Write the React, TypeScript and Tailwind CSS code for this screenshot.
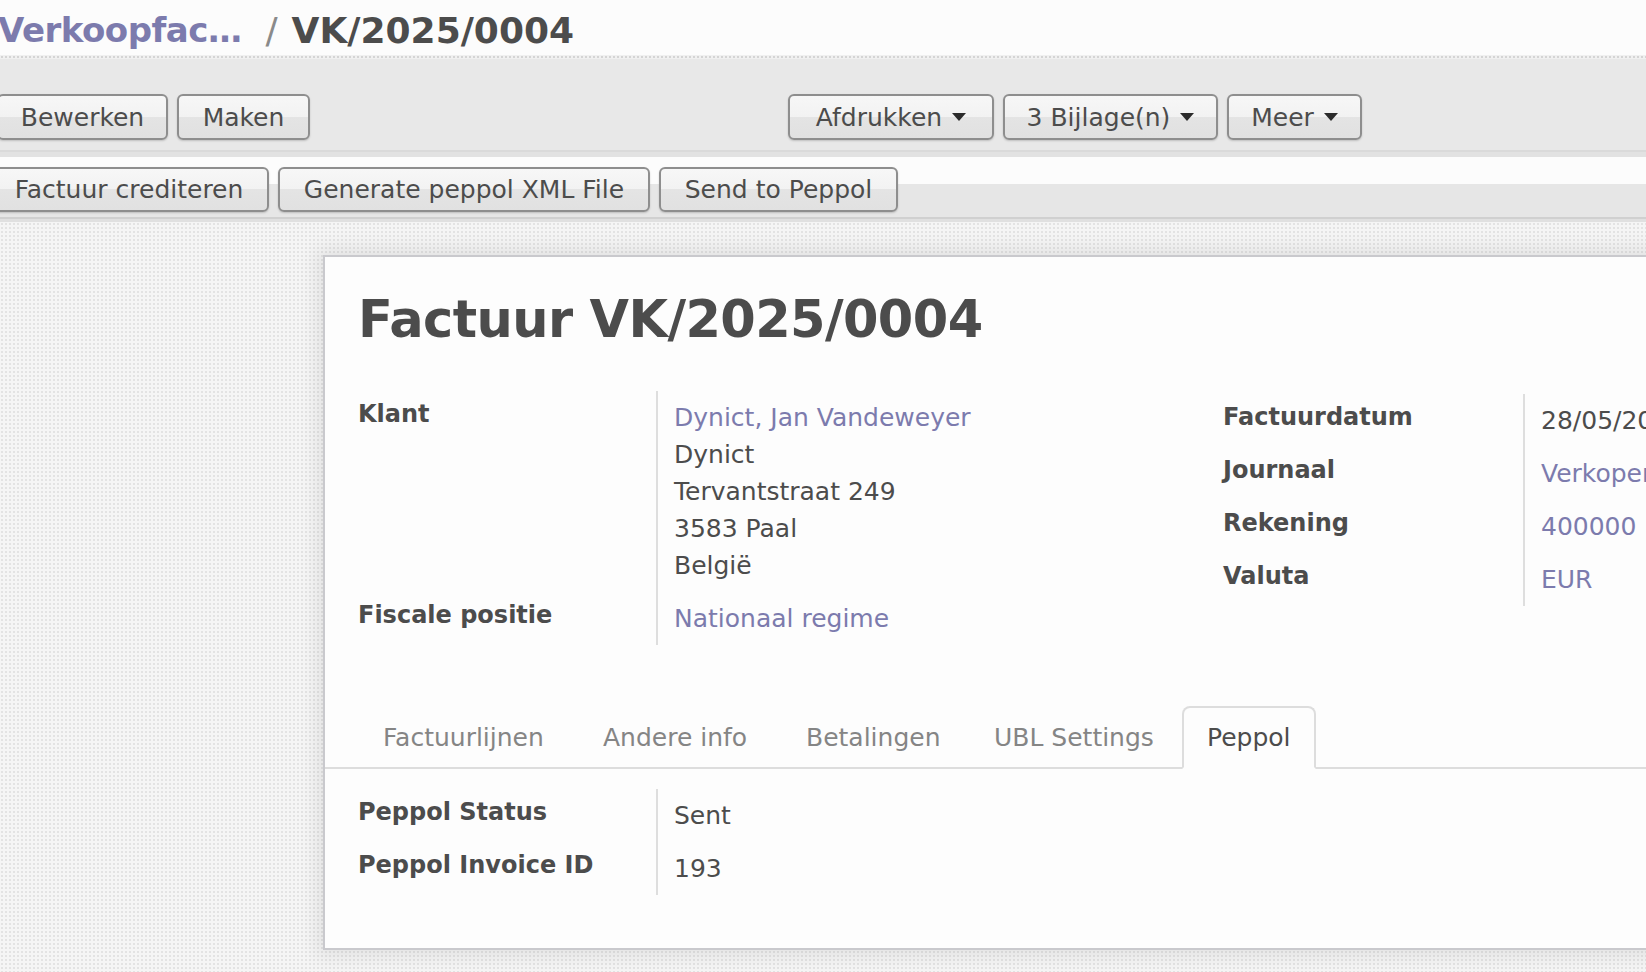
import React from "react";

const Caret = () => (
  <svg width="14" height="8" viewBox="0 0 14 8" className="shrink-0">
    <path d="M0 0h14L7 8z" fill="#2b2b2b" />
  </svg>
);

function Btn({ w, children, caret }: { w: string; children: React.ReactNode; caret?: boolean }) {
  return (
    <div
      className={
        "flex shrink-0 items-center justify-center gap-[10px] rounded-[6px] border-2 border-[#8e8e8e] bg-[linear-gradient(#f7f7f7_0%,#f2f2f2_50%,#e4e4e4_50%,#e1e1e1_100%)] text-[25px] leading-none text-[#4c4c4c] shadow-[0_1px_2px_rgba(0,0,0,0.18)] " +
        w
      }
    >
      <span>{children}</span>
      {caret ? <Caret /> : null}
    </div>
  );
}

function Row({ label, labelW, children }: { label: string; labelW: string; children: React.ReactNode }) {
  return (
    <div className="flex">
      <div className={"shrink-0 border-r-2 border-[#dedede] pt-[5px] pb-[8px] text-[24px] font-bold leading-[37px] text-[#4c4c4c] " + labelW}>
        {label}
      </div>
      <div className="py-[8px] pl-[16px] text-[25px] leading-[37px] text-[#4c4c4c] whitespace-nowrap">{children}</div>
    </div>
  );
}

const Link = ({ children }: { children: React.ReactNode }) => <span className="text-[#7c7bad]">{children}</span>;

function Tab({ w, active, children }: { w: string; active?: boolean; children: React.ReactNode }) {
  return (
    <div
      className={
        "-mb-[2px] shrink-0 rounded-t-[8px] border-2 pt-[11px] pb-[11px] pl-[23px] text-[25px] leading-[37px] whitespace-nowrap " +
        (active
          ? "border-[#dddddd] border-b-[#fdfdfd] bg-[#fdfdfd] text-[#4c4c4c] "
          : "border-transparent text-[#858585] ") +
        w
      }
    >
      {children}
    </div>
  );
}

export default function App() {
  return (
    <div className="flex h-[972px] w-[1646px] flex-col overflow-hidden bg-[#f4f4f4] font-['DejaVu_Sans',sans-serif]">
      {/* breadcrumb */}
      <div className="flex h-[55px] shrink-0 items-center bg-[#fcfcfc] pt-[6px] whitespace-nowrap">
        <span className="ml-[-2px] text-[34px] font-bold tracking-[-0.5px] text-[#7c7bad]">Verkoopfac…</span>
        <span className="ml-[24px] text-[36px] text-[#8a8a8a]">/</span>
        <span className="ml-[14px] text-[36px] font-bold text-[#4c4c4c]">VK/2025/0004</span>
      </div>
      <div className="h-[4px] shrink-0 bg-[#f0f0f0] bg-[radial-gradient(circle,#d4d4d4_0.8px,transparent_1.2px)] bg-[length:4px_4px]" />
      {/* row 1 */}
      <div className="flex h-[91px] shrink-0 items-start bg-[#e8e8e8] pt-[35px]">
        <div className="ml-[-3px] flex gap-[9px]">
          <Btn w="h-[46px] w-[171px]">Bewerken</Btn>
          <Btn w="h-[46px] w-[133px]">Maken</Btn>
        </div>
        <div className="ml-[478px] flex gap-[9px]">
          <Btn w="h-[46px] w-[206px]" caret>Afdrukken</Btn>
          <Btn w="h-[46px] w-[215px]" caret>3 Bijlage(n)</Btn>
          <Btn w="h-[46px] w-[135px]" caret>Meer</Btn>
        </div>
      </div>
      <div className="h-[7px] shrink-0 border-t-2 border-[#dadada] bg-[#e2e2e2]" />
      {/* row 2 */}
      <div className="flex h-[60px] shrink-0 items-start bg-[linear-gradient(#fcfcfc_0%,#fcfcfc_45%,#e6e6e6_45%,#e6e6e6_100%)] pt-[10px]">
        <div className="ml-[-11px] flex gap-[9px]">
          <Btn w="h-[45px] w-[280px]">Factuur crediteren</Btn>
          <Btn w="h-[45px] w-[372px]">Generate peppol XML File</Btn>
          <Btn w="h-[45px] w-[239px]">Send to Peppol</Btn>
        </div>
      </div>
      <div className="h-[5px] shrink-0 border-t-2 border-[#d0d0d0] bg-[#e0e0e0]" />
      {/* page */}
      <div className="flex-1 bg-[#f5f5f5] bg-[radial-gradient(circle,#e3e3e3_1px,transparent_1.4px)] bg-[length:4px_4px] pt-[33px] pl-[323px]">
        <div className="w-[1500px] border-2 border-[#c9c9cd] bg-[#fdfdfd] pb-[53px] shadow-[0_0_18px_6px_rgba(0,0,0,0.08)]">
          <div className="mt-[33px] pl-[33px] text-[51px] font-bold leading-[60px] tracking-[-0.6px] text-[#4c4c4c]">
            Factuur VK/2025/0004
          </div>
          <div className="mt-[41px] flex pl-[33px]">
            <div className="w-[865px] shrink-0">
              <Row label="Klant" labelW="w-[300px]">
                <div><Link>Dynict, Jan Vandeweyer</Link></div>
                <div>Dynict</div>
                <div>Tervantstraat 249</div>
                <div>3583 Paal</div>
                <div>België</div>
              </Row>
              <Row label="Fiscale positie" labelW="w-[300px]">
                <Link>Nationaal regime</Link>
              </Row>
            </div>
            <div className="mt-[3px]">
              <Row label="Factuurdatum" labelW="w-[302px]">28/05/2025</Row>
              <Row label="Journaal" labelW="w-[302px]"><Link>Verkopen (EUR)</Link></Row>
              <Row label="Rekening" labelW="w-[302px]"><Link>400000 Handelsdebiteuren</Link></Row>
              <Row label="Valuta" labelW="w-[302px]"><Link>EUR</Link></Row>
            </div>
          </div>
          {/* notebook */}
          <div className="mt-[61px] flex border-b-2 border-[#dddddd] pl-[33px]">
            <Tab w="w-[220px]">Factuurlijnen</Tab>
            <Tab w="w-[203px]">Andere info</Tab>
            <Tab w="w-[188px]">Betalingen</Tab>
            <Tab w="w-[213px]">UBL Settings</Tab>
            <Tab w="w-[134px]" active>Peppol</Tab>
          </div>
          <div className="mt-[20px] pl-[33px]">
            <Row label="Peppol Status" labelW="w-[300px]">Sent</Row>
            <Row label="Peppol Invoice ID" labelW="w-[300px]">193</Row>
          </div>
        </div>
      </div>
    </div>
  );
}
